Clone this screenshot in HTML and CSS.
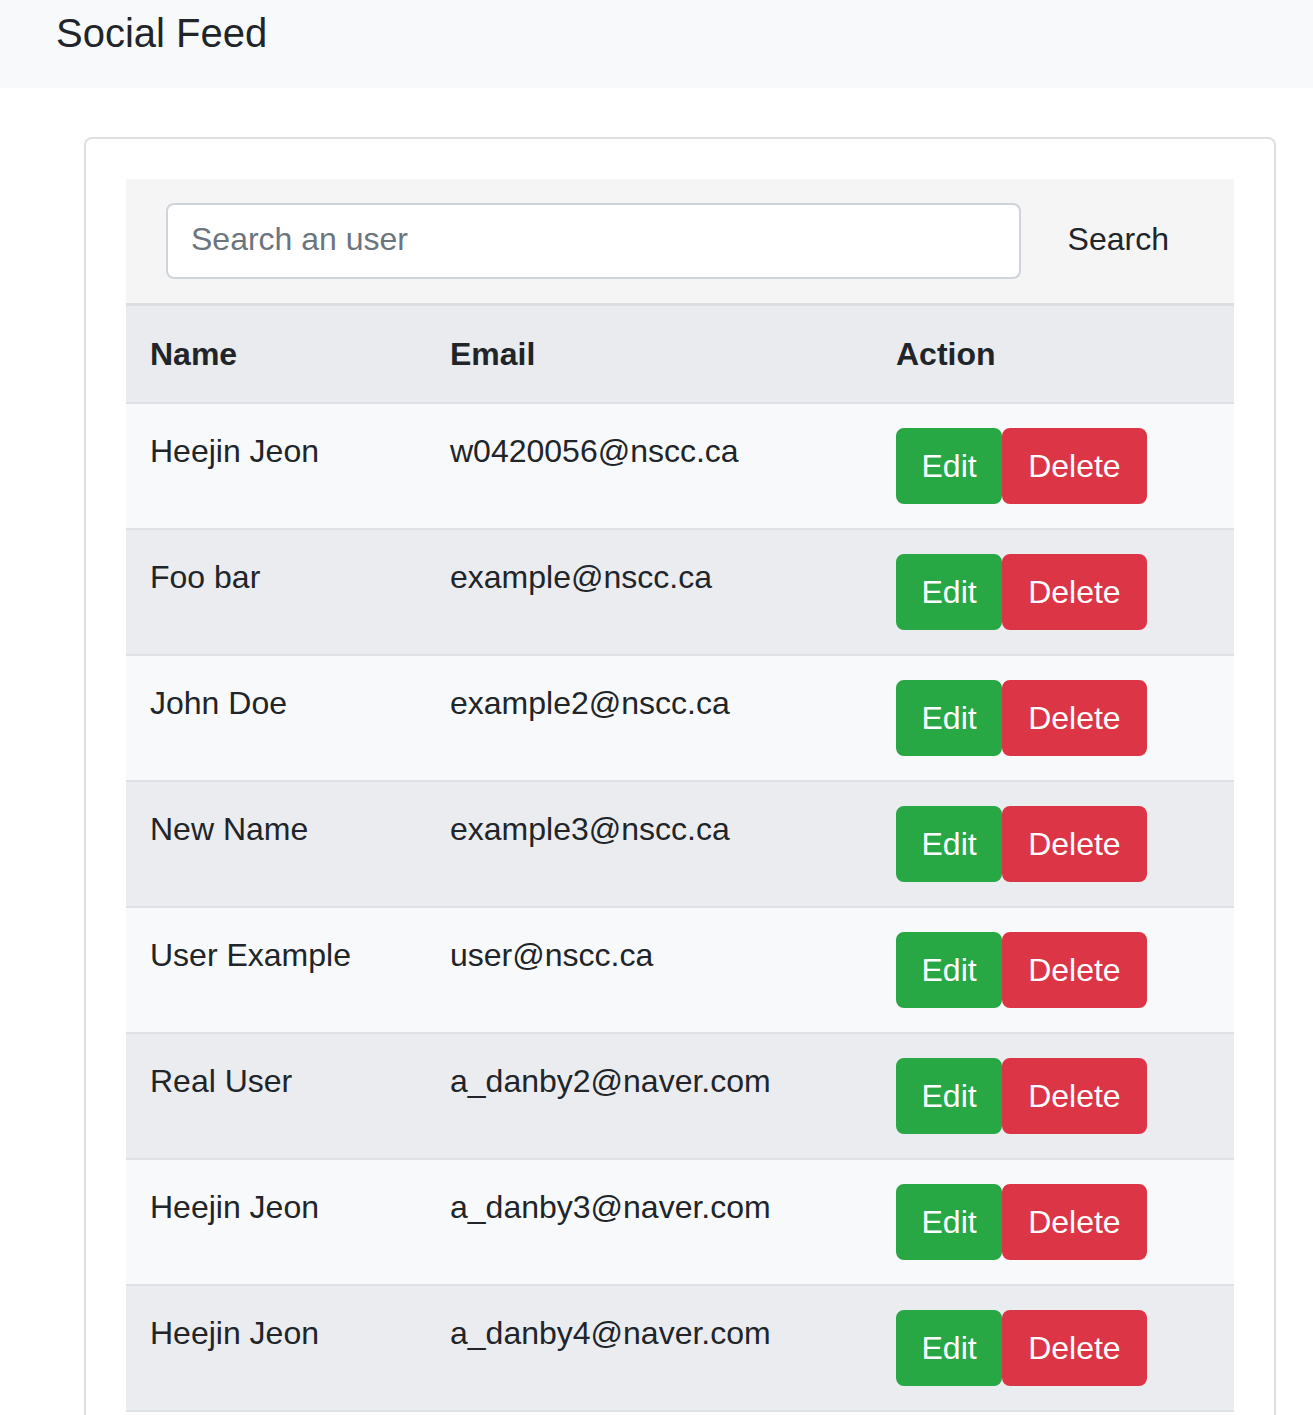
FILE: index.html
```html
<!DOCTYPE html>
<html lang="en">
<head>
<meta charset="utf-8">
<title>Social Feed</title>
<link rel="stylesheet" href="styles.css">
</head>
<body>
<nav class="navbar"><span class="brand">Social Feed</span></nav>
<main class="main">
  <div class="card">
    <form class="search-bar">
      <input class="search-input" type="text" placeholder="Search an user">
      <button class="btn btn-search" type="button">Search</button>
    </form>
    <table class="users">
      <thead>
        <tr><th class="col-name">Name</th><th class="col-email">Email</th><th class="col-action">Action</th></tr>
      </thead>
      <tbody>
        <tr><td>Heejin Jeon</td><td>w0420056@nscc.ca</td><td><div class="actions"><button class="btn btn-edit">Edit</button><button class="btn btn-delete">Delete</button></div></td></tr>
        <tr><td>Foo bar</td><td>example@nscc.ca</td><td><div class="actions"><button class="btn btn-edit">Edit</button><button class="btn btn-delete">Delete</button></div></td></tr>
        <tr><td>John Doe</td><td>example2@nscc.ca</td><td><div class="actions"><button class="btn btn-edit">Edit</button><button class="btn btn-delete">Delete</button></div></td></tr>
        <tr><td>New Name</td><td>example3@nscc.ca</td><td><div class="actions"><button class="btn btn-edit">Edit</button><button class="btn btn-delete">Delete</button></div></td></tr>
        <tr><td>User Example</td><td>user@nscc.ca</td><td><div class="actions"><button class="btn btn-edit">Edit</button><button class="btn btn-delete">Delete</button></div></td></tr>
        <tr><td>Real User</td><td>a_danby2@naver.com</td><td><div class="actions"><button class="btn btn-edit">Edit</button><button class="btn btn-delete">Delete</button></div></td></tr>
        <tr><td>Heejin Jeon</td><td>a_danby3@naver.com</td><td><div class="actions"><button class="btn btn-edit">Edit</button><button class="btn btn-delete">Delete</button></div></td></tr>
        <tr><td>Heejin Jeon</td><td>a_danby4@naver.com</td><td><div class="actions"><button class="btn btn-edit">Edit</button><button class="btn btn-delete">Delete</button></div></td></tr>
      </tbody>
    </table>
  </div>
</main>
</body>
</html>
```
FILE: styles.css
```css
* { box-sizing: border-box; }
html, body { margin: 0; padding: 0; }
body {
  font-family: "Liberation Sans", Arial, sans-serif;
  font-size: 32px;
  line-height: 48px;
  color: #212529;
  background: #fff;
}
.navbar {
  height: 88px;
  background: #f8f9fa;
  padding: 3px 0 0 56px;
}
.brand {
  font-size: 40px;
  line-height: 60px;
  color: #212529;
}
.main {
  padding: 49px 0 0 84px;
}
.card {
  width: 1192px;
  border: 2px solid #dfdfdf;
  border-bottom: none;
  border-radius: 8px 8px 0 0;
  padding: 40px 40px 40px;
}
.search-bar {
  margin: 0;
  display: flex;
  justify-content: space-between;
  align-items: center;
  background: #f5f5f5;
  padding: 24px 40px;
  border-bottom: 3px solid #dcdee1;
}
.search-input {
  width: 855px;
  height: 76px;
  border: 2px solid #ced4da;
  border-radius: 8px;
  padding: 10px 23px 14px;
  font: inherit;
  color: #495057;
  background: #fff;
}
.search-input::placeholder { color: #6c757d; opacity: 1; }
.btn {
  font: inherit;
  border: 2px solid transparent;
  border-radius: 8px;
  padding: 12px 24px;
  background: transparent;
  color: #212529;
  cursor: pointer;
}
.btn-search { margin-right: -1px; padding: 10px 24px 14px; }
.users {
  width: 100%;
  border-collapse: collapse;
}
.users th, .users td {
  text-align: left;
  vertical-align: top;
  padding: 23px 24px 24px;
}
.users thead th {
  font-weight: bold;
  background: #e9ebee;
  border-bottom: 2px solid #dee2e6;
  padding: 24px;
}
.col-name { width: 300px; }
.col-email { width: 446px; }
.users tbody td {
  border-top: 2px solid #dee2e6;
}
.users tbody tr:last-child td {
  border-bottom: 2px solid #dee2e6;
}
.users tbody tr:nth-child(odd) td { background: #f8f9fa; }
.users tbody tr:nth-child(even) td { background: #ebecef; }
.actions { display: flex; padding-top: 1px; }
.btn-edit {
  background: #28a745;
  border-color: #28a745;
  color: #fff;
  padding: 12px 23.5px;
}
.btn-delete {
  background: #dc3545;
  border-color: #dc3545;
  color: #fff;
  padding: 12px 24px;
}
```
